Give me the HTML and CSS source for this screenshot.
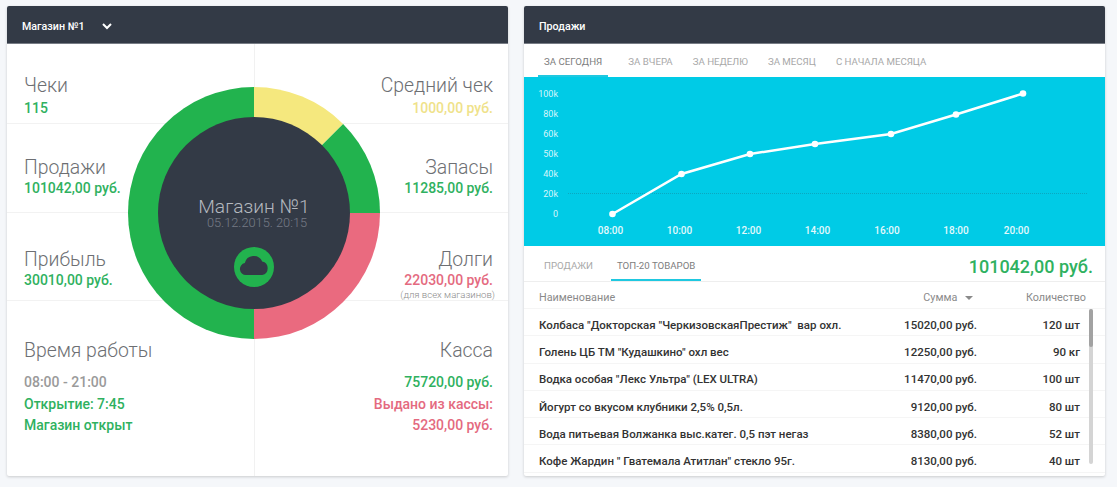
FILE: index.html
```html
<!DOCTYPE html>
<html lang="ru">
<head>
  <meta charset="UTF-8">
  <title>Магазин №1</title>
  <link rel="stylesheet" href="styles.css">
</head>
<body>
  <div class="page">
    <!-- Store summary -->
    <section class="card card-store">
      <header class="card-head">
        <span>Магазин №1</span>
        <svg class="chevron" width="10" height="7" viewBox="0 0 10 7"><path d="M1 1l4 4 4-4" fill="none" stroke="#fff" stroke-width="2"/></svg>
      </header>
      <div class="stats">
        <div class="stat-row row-a">
          <div class="stat">
            <div class="stat-title">Чеки</div>
            <div class="stat-value green">115</div>
          </div>
          <div class="stat right">
            <div class="stat-title">Средний чек</div>
            <div class="stat-value yellow">1000,00 руб.</div>
          </div>
        </div>
        <div class="stat-row row-b">
          <div class="stat">
            <div class="stat-title">Продажи</div>
            <div class="stat-value green">101042,00 руб.</div>
          </div>
          <div class="stat right">
            <div class="stat-title">Запасы</div>
            <div class="stat-value green">11285,00 руб.</div>
          </div>
        </div>
        <div class="stat-row row-c">
          <div class="stat">
            <div class="stat-title">Прибыль</div>
            <div class="stat-value green">30010,00 руб.</div>
          </div>
          <div class="stat right">
            <div class="stat-title">Долги</div>
            <div class="stat-value red">22030,00 руб.</div>
            <div class="stat-note">(для всех магазинов)</div>
          </div>
        </div>
        <div class="stat-row row-d">
          <div class="stat">
            <div class="stat-title">Время работы</div>
            <ul class="stat-list">
              <li class="grey">08:00 - 21:00</li>
              <li class="green">Открытие: 7:45</li>
              <li class="green">Магазин открыт</li>
            </ul>
          </div>
          <div class="stat right">
            <div class="stat-title">Касса</div>
            <ul class="stat-list">
              <li class="green">75720,00 руб.</li>
              <li class="red">Выдано из кассы:</li>
              <li class="red">5230,00 руб.</li>
            </ul>
          </div>
        </div>
      </div>

      <div class="donut">
        <svg width="252" height="252" viewBox="-126 -126 252 252">
          <path d="M0 -126A126 126 0 0 1 89.1 -89.1L0 0Z" fill="#f5e87e"/>
          <path d="M89.1 -89.1A126 126 0 0 1 126 0L0 0Z" fill="#22b34e"/>
          <path d="M126 0A126 126 0 0 1 0 126L0 0Z" fill="#ea6a7f"/>
          <path d="M0 126A126 126 0 0 1 0 -126Z" fill="#22b34e"/>
        </svg>
        <div class="donut-core">
          <div class="core-title">Магазин №1</div>
          <div class="core-date">05.12.2015. 20:15</div>
          <svg class="core-icon" width="40" height="40" viewBox="0 0 40 40">
            <circle cx="20" cy="20" r="20" fill="#22b34e"/>
            <path d="M12 28a6 6 0 0 1-1.200-11.900 9.200 9.200 0 0 1 17.400-1.600 6.900 6.900 0 0 1 0 13.500z" fill="#333a46"/>
          </svg>
        </div>
      </div>
    </section>

    <!-- Sales -->
    <section class="card card-sales">
      <header class="card-head">
        <span>Продажи</span>
      </header>
      <nav class="tabs">
        <a class="tab active">За сегодня</a>
        <a class="tab">За вчера</a>
        <a class="tab">За неделю</a>
        <a class="tab">За месяц</a>
        <a class="tab">С начала месяца</a>
      </nav>

      <svg class="chart" width="581" height="169" viewBox="524 77 581 169">
        <line class="chart-grid" x1="568" y1="193.500" x2="1087" y2="193.500"/>
        <g class="chart-y">
          <text x="558" y="96.500">100k</text>
          <text x="558" y="116.500">80k</text>
          <text x="558" y="136.500">60k</text>
          <text x="558" y="156.500">50k</text>
          <text x="558" y="176.500">40k</text>
          <text x="558" y="196.500">20k</text>
          <text x="558" y="216.500">0</text>
        </g>
        <g class="chart-x">
          <text x="610.500" y="234">08:00</text>
          <text x="679.500" y="234">10:00</text>
          <text x="748.500" y="234">12:00</text>
          <text x="817.500" y="234">14:00</text>
          <text x="887" y="234">16:00</text>
          <text x="956" y="234">18:00</text>
          <text x="1016.500" y="234">20:00</text>
        </g>
        <polyline class="chart-line" points="612.500,214 681.500,174 750,154 815,144 891,134 956,114.500 1023,93.500"/>
        <g fill="#fff">
          <circle cx="612.500" cy="214" r="3.300"/>
          <circle cx="681.500" cy="174" r="3.300"/>
          <circle cx="750" cy="154" r="3.300"/>
          <circle cx="815" cy="144" r="3.300"/>
          <circle cx="891" cy="134" r="3.300"/>
          <circle cx="956" cy="114.500" r="3.300"/>
          <circle cx="1023" cy="93.500" r="3.300"/>
        </g>
      </svg>

      <div class="subhead">
        <nav class="tabs tabs-sub">
          <a class="tab">Продажи</a>
          <a class="tab active">Топ-20 товаров</a>
        </nav>
        <div class="total">101042,00 руб.</div>
      </div>

      <div class="goods">
        <div class="goods-row goods-head">
          <div>Наименование</div>
          <div class="sum sorted">Сумма <i class="caret"></i></div>
          <div class="qty">Количество</div>
        </div>
        <div class="goods-body">
          <div class="goods-row"><div>Колбаса "Докторская "ЧеркизовскаяПрестиж"&nbsp; вар охл.</div><div class="sum">15020,00 руб.</div><div class="qty">120 шт</div></div>
          <div class="goods-row"><div>Голень ЦБ ТМ "Кудашкино" охл вес</div><div class="sum">12250,00 руб.</div><div class="qty">90 кг</div></div>
          <div class="goods-row"><div>Водка особая "Лекс Ультра" (LEX ULTRA)</div><div class="sum">11470,00 руб.</div><div class="qty">100 шт</div></div>
          <div class="goods-row"><div>Йогурт со вкусом клубники 2,5% 0,5л.</div><div class="sum">9120,00 руб.</div><div class="qty">80 шт</div></div>
          <div class="goods-row"><div>Вода питьевая Волжанка выс.катег. 0,5 пэт негаз</div><div class="sum">8380,00 руб.</div><div class="qty">52 шт</div></div>
          <div class="goods-row"><div>Кофе Жардин " Гватемала Атитлан" стекло 95г.</div><div class="sum">8130,00 руб.</div><div class="qty">40 шт</div></div>
          <div class="scrollbar"><div class="scrollbar-thumb"></div></div>
        </div>
      </div>
    </section>
  </div>
</body>
</html>
```

FILE: styles.css
```css
* {
  box-sizing: border-box;
}
html, body {
  height: 100%;
}
body {
  margin: 0;
  background: #f5f7fa;
  font-family: Roboto, "Noto Sans", sans-serif;
  overflow: hidden;
}
.page {
  display: flex;
  gap: 16px;
  padding: 6px 12px 0 7px;
}
.card {
  position: relative;
  height: 470px;
  background: #fff;
  border-radius: 2px;
  box-shadow: 0 1px 3px rgba(0,0,0,0.18);
  overflow: hidden;
}
.card-store {
  width: 501px;
}
.card-sales {
  width: 581px;
}
.card-head {
  display: flex;
  align-items: center;
  height: 38px;
  padding: 4px 15px 0;
  background: #333a46;
  border-bottom: 1px solid #777c85;
  color: #fff;
  font-size: 10.700px;
  font-weight: 500;
}
.chevron {
  margin-left: 17px;
}

/* left card */
.stats {
  background: linear-gradient(#f1f1f1, #f1f1f1) 247px 0 / 1px 100% no-repeat;
}
.stat-row {
  display: flex;
  border-bottom: 1px solid #f2f2f2;
}
.stat-row:last-child {
  border-bottom: 0;
}
.row-a { height: 80px; padding-top: 30px; }
.row-b { height: 89px; padding-top: 32px; }
.row-c { height: 88px; padding-top: 35px; }
.row-d { height: 175px; padding-top: 38px; }
.stat {
  flex: 1;
  padding: 0 17px;
}
.stat.right {
  padding-right: 15px;
  text-align: right;
}
.stat-title {
  color: #6d6f73;
  font-size: 19.400px;
  font-weight: 300;
  line-height: 24px;
}
.stat-value {
  font-size: 14px;
  font-weight: 500;
  line-height: 16px;
}
.row-a .stat-value {
  margin-top: 2px;
}
.stat-note {
  margin: 1px -2px 0 0;
  color: #8a8a8a;
  font-size: 9.600px;
  font-weight: 300;
  line-height: 12px;
}
.stat-list {
  margin: 9px 0 0;
  padding: 0;
  list-style: none;
  font-size: 14px;
  font-weight: 500;
  line-height: 21.500px;
}
.green { color: #2fb160; }
.yellow { color: #efe28a; }
.red { color: #e46a80; }
.grey { color: #9a9a9a; }

/* ring over the stats grid */
.donut {
  position: absolute;
  left: 121px;
  top: 81px;
  width: 252px;
  height: 252px;
}
.donut svg {
  display: block;
}
.donut-core {
  position: absolute;
  left: 30px;
  top: 30px;
  display: flex;
  flex-direction: column;
  align-items: center;
  width: 192px;
  height: 192px;
  padding-top: 81px;
  border-radius: 50%;
  background: #333a46;
}
.core-title {
  color: #b4b8bf;
  font-size: 19.200px;
  font-weight: 300;
  line-height: 18px;
}
.core-date {
  margin-left: 6px;
  color: #777c86;
  font-size: 12.800px;
  font-weight: 300;
  line-height: 13px;
}
.core-icon {
  margin-top: 18px;
}

/* right card */
.tabs {
  display: flex;
  height: 33px;
  padding-left: 14px;
}
.tab {
  display: flex;
  align-items: center;
  padding: 6px 6px 2px;
  margin-right: 8px;
  border-bottom: 2px solid transparent;
  color: #a8a8a8;
  font-size: 9.700px;
  text-transform: uppercase;
}
.tab.active {
  margin-right: 14px;
  border-bottom-color: #1fc8e0;
  color: #7d7d7d;
}
.chart {
  display: block;
  background: #00cbe6;
}
.chart-grid {
  stroke: #0aa8c0;
  stroke-width: 1;
  stroke-dasharray: 1 1;
}
.chart-y text {
  fill: #d6f6fb;
  font-size: 9px;
  text-anchor: end;
}
.chart-x text {
  fill: #e4f9fc;
  font-size: 10px;
  font-weight: 500;
  text-anchor: middle;
}
.chart-line {
  fill: none;
  stroke: #fff;
  stroke-width: 2.500;
}
.subhead {
  display: flex;
  justify-content: space-between;
  align-items: stretch;
  height: 36px;
  padding: 1px 12px 0 0;
  border-bottom: 1px solid #eee;
}
.tabs-sub {
  height: 34px;
}
.tabs-sub .tab {
  margin-right: 12px;
}
.total {
  color: #2fb160;
  font-size: 18px;
  font-weight: 500;
  line-height: 39px;
}
.goods {
  font-size: 11.500px;
  font-weight: 500;
  color: #333;
}
.goods-row {
  display: flex;
  align-items: center;
  height: 27.300px;
  padding: 5px 0 0 15px;
  border-bottom: 1px solid #f5f5f5;
}
.goods-row > div:first-child {
  flex: 1;
}
.goods-head {
  height: 27px;
  color: #8a8a8a;
  font-size: 10.800px;
  font-weight: 400;
}
.sum {
  width: 120px;
  text-align: right;
}
.sum.sorted {
  padding-right: 4px;
}
.qty {
  width: 128px;
  padding-right: 25px;
  text-align: right;
}
.goods-head .qty {
  padding-right: 19px;
}
.caret {
  display: inline-block;
  margin-left: 5px;
  border-top: 4px solid #8a8a8a;
  border-left: 4px solid transparent;
  border-right: 4px solid transparent;
  vertical-align: 1px;
}
.goods-body {
  position: relative;
}
.scrollbar {
  position: absolute;
  top: 0;
  right: 12px;
  width: 4px;
  height: 155px;
  border-radius: 2px;
  background: #d4d4d4;
}
.scrollbar-thumb {
  height: 38px;
  border-radius: 2px;
  background: #a2a2a2;
}
```
